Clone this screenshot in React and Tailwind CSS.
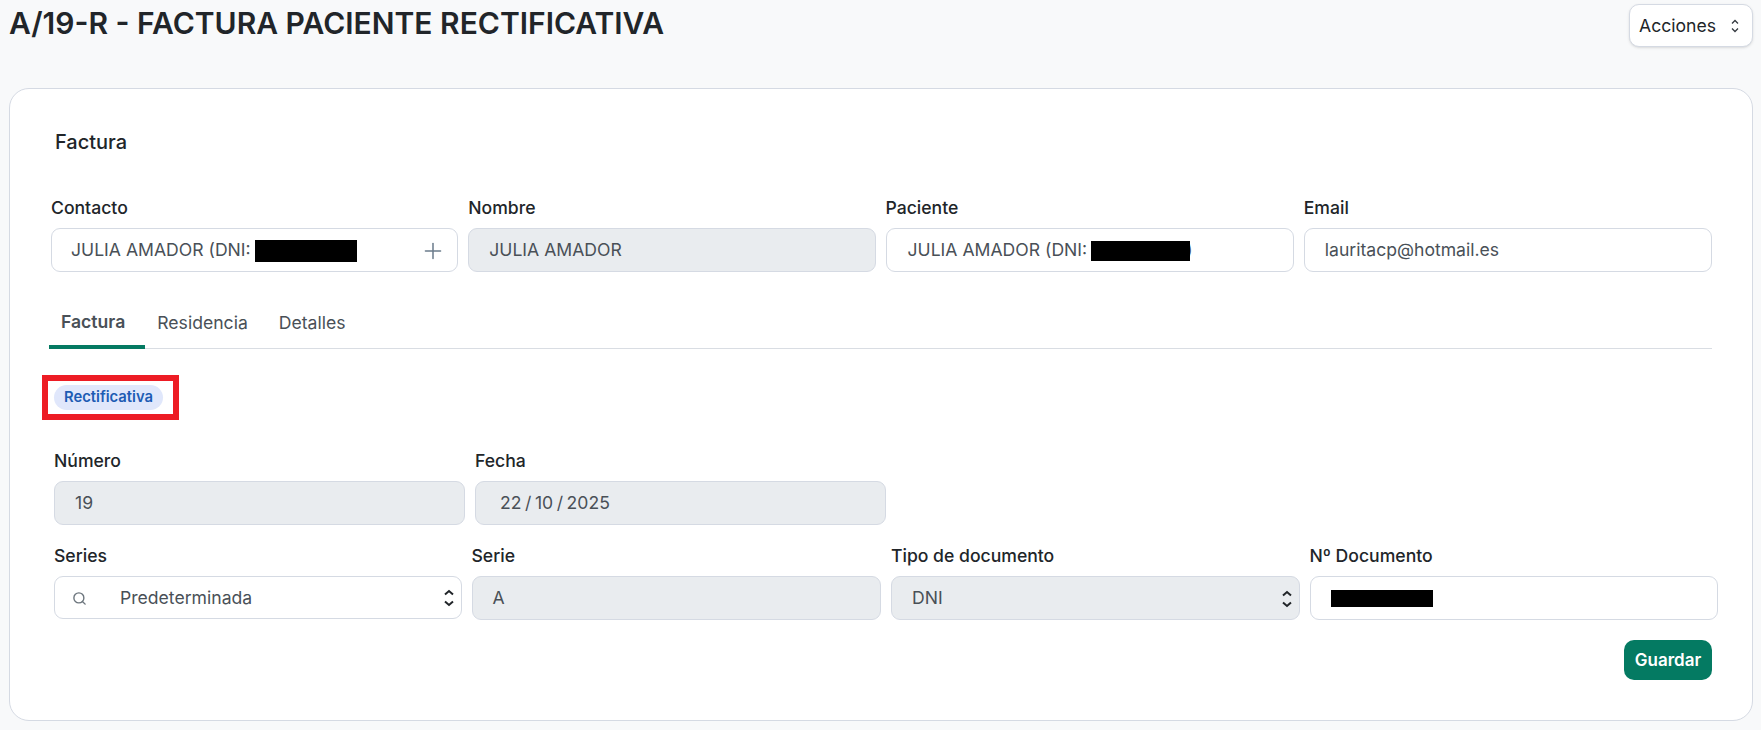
import { Plus, Search } from "lucide-react";

function Field({ label, className = "", children }) {
  return (
    <div className={`flex flex-col ${className}`}>
      <label className="mb-2 h-6 text-[17.6px] leading-6 font-medium text-[#212529]">{label}</label>
      {children}
    </div>
  );
}

function Box({ disabled, className = "", children }) {
  return (
    <div
      className={`flex h-11 items-center rounded-[9px] border border-[#d5dae3] px-5 pt-px text-[17.6px] text-[#495057] ${
        disabled ? "bg-[#e9ecef]" : "bg-white"
      } ${className}`}
    >
      {children}
    </div>
  );
}

function UpDown() {
  return (
    <svg width="10" height="20" viewBox="0 0 10 20" fill="none" stroke="#212529" strokeWidth="2" className="ml-auto -mr-[13px] shrink-0">
      <path d="M1 6.500 5 3l4 3.500M1 13.500 5 17l4-3.500" />
    </svg>
  );
}

export default function App() {
  return (
    <div className="h-[730px] overflow-hidden bg-[#f8f9fa] pr-2 pl-[9px] font-['Inter',sans-serif]">
      <header className="flex h-[88px] items-start justify-between pt-1">
        <h1 className="pt-[1px] text-[30px] leading-9 font-semibold text-[#212529]">
          A/19-R - FACTURA PACIENTE RECTIFICATIVA
        </h1>
        <button className="flex h-[43px] w-[124px] items-center justify-between rounded-[10px] border border-[#d5dae3] bg-white pt-px pr-[13px] pl-[9px] text-[17.6px] text-[#212529] shadow-sm">
          Acciones
          <svg width="8" height="16" viewBox="0 0 8 16" fill="none" stroke="#343a40" strokeWidth="1.300">
            <path d="M1 5.500 4 2.500l3 3M1 10.500l3 3 3-3" />
          </svg>
        </button>
      </header>

      <main className="h-[633px] rounded-[20px] border border-[#d5dae3] bg-white pt-10 pr-10 pl-10">
        <h2 className="h-[27px] pl-[5px] text-[20px] leading-[27px] font-medium text-[#212529]">Factura</h2>

        <div className="mt-10 grid grid-cols-4 gap-x-[11px]">
          <Field label="Contacto" className="ml-px -mr-px">
            <Box className="pl-[19px]">
              JULIA AMADOR (DNI:
              <span className="ml-1 h-[22px] w-[102px] bg-black" />
              <Plus size={26} strokeWidth={1.4} className="ml-auto -mr-[9px] text-[#6b7c8c]" />
            </Box>
          </Field>
          <Field label="Nombre">
            <Box disabled>JULIA AMADOR</Box>
          </Field>
          <Field label="Paciente" className="-ml-px">
            <Box className="pl-[21px]">
              JULIA AMADOR (DNI:
              <span className="relative z-10 ml-1 h-5 w-[99px] bg-black" />
              <span className="-ml-[4px]">)</span>
            </Box>
          </Field>
          <Field label="Email" className="-ml-px">
            <Box>lauritacp@hotmail.es</Box>
          </Field>
        </div>

        <nav className="mt-[15px] flex h-[62px] items-end border-b border-[#d9dde3] text-[17.6px] text-[#495057]">
          <a className="-mb-px -ml-px flex h-[46px] items-center border-b-4 border-[#047a62] pr-5 pb-[3px] pl-3 font-semibold">Factura</a>
          <a className="flex h-[46px] items-center px-3 pb-[3px]">Residencia</a>
          <a className="ml-[7px] flex h-[46px] items-center px-3 pb-[3px]">Detalles</a>
        </nav>

        <div className="-mr-[6px] pl-[4px]">
          <div className="mt-[26px] -ml-3 w-[137px] border-[6px] border-[#ed1c24] py-1 pl-1.5">
            <span className="block h-[25px] w-[109px] rounded-full bg-[#e0e7fb] text-center text-[14.800px] leading-[25px] font-semibold text-[#1d5cb4]">
              Rectificativa
            </span>
          </div>

          <div className="mt-[29px] flex gap-[10px]">
            <Field label="Número" className="w-[411px]">
              <Box disabled>19</Box>
            </Field>
            <Field label="Fecha" className="w-[411px]">
              <Box disabled className="pl-[24px] [word-spacing:-1.4px]">22 / 10 / 2025</Box>
            </Field>
          </div>

          <div className="mt-[19px] grid grid-cols-4 gap-x-[10px]">
            <Field label="Series" className="mr-px">
              <Box className="h-[43px]">
                <Search size={15} strokeWidth={2.2} className="-ml-[3px] mr-[33px] text-[#6c757d]" />
                Predeterminada
                <UpDown />
              </Box>
            </Field>
            <Field label="Serie" className="-ml-px">
              <Box disabled>A</Box>
            </Field>
            <Field label="Tipo de documento">
              <Box disabled>
                DNI
                <UpDown />
              </Box>
            </Field>
            <Field label="Nº Documento">
              <Box>
                <span className="h-[17px] w-[102px] bg-black" />
              </Box>
            </Field>
          </div>

          <div className="mt-5 flex justify-end pr-[6px]">
            <button className="h-10 w-[88px] rounded-[10px] bg-[#047a62] pt-px text-[17px] font-semibold text-white">Guardar</button>
          </div>
        </div>
      </main>
    </div>
  );
}
